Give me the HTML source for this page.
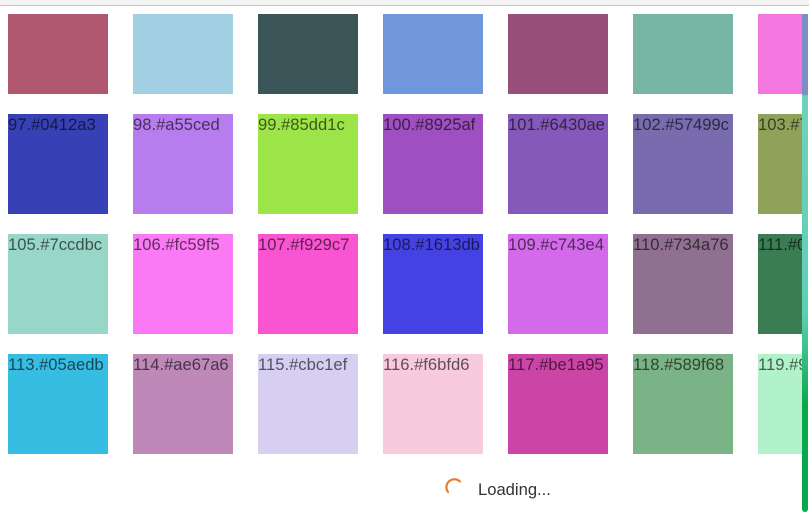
<!DOCTYPE html>
<html><head><style>
body{margin:0;width:809px;height:514px;overflow:hidden;background:#fff;position:relative;font-family:"Liberation Sans",sans-serif}
.top{position:absolute;left:0;top:0;width:809px;height:5px;background:#f4f4f4;border-bottom:1px solid #c4c4c4}
.s{position:absolute;width:100px;height:100px;font-size:16.6px;line-height:20px;padding-top:1px;box-sizing:border-box;color:rgba(0,0,0,0.62);white-space:nowrap;overflow:hidden}
.bar{position:absolute;left:802px;top:14px;width:6px;height:498px;background:linear-gradient(#7c8ec6 0,#7c8ec6 80px,#6fd1bf 82px,#5ecfb3 300px,#0aa84d 390px,#0aa84d);border-radius:0 0 3px 3px}
.ld{position:absolute;left:478px;top:480px;font-size:16.6px;color:#333}
</style></head><body>
<div class="top"></div>
<div class="s" style="left:8px;top:14px;height:80px;background:#b0586f"></div>
<div class="s" style="left:133px;top:14px;height:80px;background:#a3cfe3"></div>
<div class="s" style="left:258px;top:14px;height:80px;background:#3c5558"></div>
<div class="s" style="left:383px;top:14px;height:80px;background:#7096dc"></div>
<div class="s" style="left:508px;top:14px;height:80px;background:#9a4f7a"></div>
<div class="s" style="left:633px;top:14px;height:80px;background:#79b5a5"></div>
<div class="s" style="left:758px;top:14px;height:80px;width:44px;background:#f477e0"></div>

<div class="s" style="left:8px;top:114px;background:#3740b5">97.#0412a3</div>
<div class="s" style="left:133px;top:114px;background:#b77cee">98.#a55ced</div>
<div class="s" style="left:258px;top:114px;background:#9de448">99.#85dd1c</div>
<div class="s" style="left:383px;top:114px;background:#9e4fc0">100.#8925af</div>
<div class="s" style="left:508px;top:114px;background:#8459ba">101.#6430ae</div>
<div class="s" style="left:633px;top:114px;background:#786caf">102.#57499c</div>
<div class="s" style="left:758px;top:114px;width:44px;background:#8ea25a">103.#7</div>

<div class="s" style="left:8px;top:234px;background:#98d6c8">105.#7ccdbc</div>
<div class="s" style="left:133px;top:234px;background:#fc79f6">106.#fc59f5</div>
<div class="s" style="left:258px;top:234px;background:#f954d2">107.#f929c7</div>
<div class="s" style="left:383px;top:234px;background:#4542e3">108.#1613db</div>
<div class="s" style="left:508px;top:234px;background:#d26aea">109.#c743e4</div>
<div class="s" style="left:633px;top:234px;background:#8f7090">110.#734a76</div>
<div class="s" style="left:758px;top:234px;width:44px;background:#3a7d53">111.#0</div>

<div class="s" style="left:8px;top:354px;background:#37bde2">113.#05aedb</div>
<div class="s" style="left:133px;top:354px;background:#be88b8">114.#ae67a6</div>
<div class="s" style="left:258px;top:354px;background:#d6cff2">115.#cbc1ef</div>
<div class="s" style="left:383px;top:354px;background:#f7cbdd">116.#f6bfd6</div>
<div class="s" style="left:508px;top:354px;background:#cb45a7">117.#be1a95</div>
<div class="s" style="left:633px;top:354px;background:#7ab386">118.#589f68</div>
<div class="s" style="left:758px;top:354px;width:44px;background:#b2f2ca">119.#9</div>

<div class="bar"></div>
<svg style="position:absolute;left:444px;top:477px" width="20" height="20" viewBox="0 0 20 20"><path d="M16 4.5 A8 8 0 0 0 4 15" fill="none" stroke="#ee7a30" stroke-width="2.2" stroke-linecap="round"/></svg>
<div class="ld">Loading...</div>
</body></html>
